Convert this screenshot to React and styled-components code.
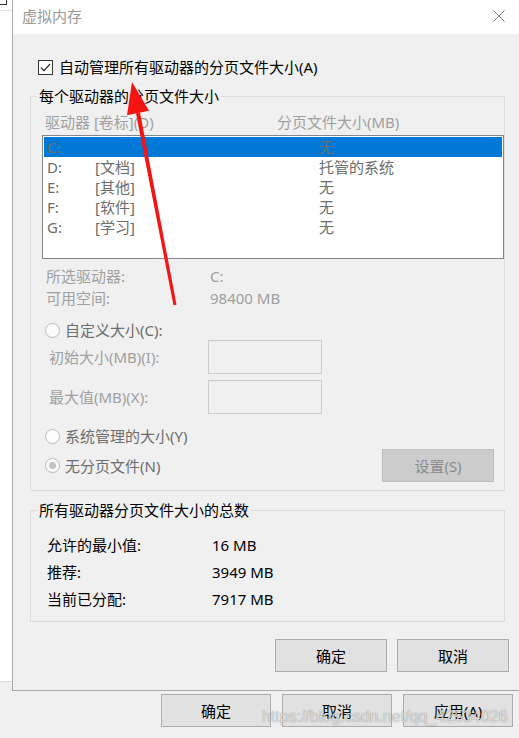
import React from 'react';
import styled, { createGlobalStyle } from 'styled-components';

const GlobalStyle = createGlobalStyle`
  html, body {
    margin: 0;
    padding: 0;
    background: #ffffff;
  }

  * {
    box-sizing: border-box;
  }
`;

const drives = [
  { letter: 'C:', label: '', size: '无', selected: true },
  { letter: 'D:', label: '[文档]', size: '托管的系统' },
  { letter: 'E:', label: '[其他]', size: '无' },
  { letter: 'F:', label: '[软件]', size: '无' },
  { letter: 'G:', label: '[学习]', size: '无' },
];

const totals = [
  { label: '允许的最小值:', value: '16 MB' },
  { label: '推荐:', value: '3949 MB' },
  { label: '当前已分配:', value: '7917 MB' },
];

const CheckIcon = () => (
  <svg width="13" height="13" viewBox="0 0 13 13">
    <path d="M2 6.6 L5 9.6 L11 3.2" fill="none" stroke="#1a1a1a" strokeWidth="1.2" />
  </svg>
);

const CloseIcon = () => (
  <svg width="12" height="12" viewBox="0 0 12 12">
    <path d="M0.5 0.5 L11.5 11.5 M11.5 0.5 L0.5 11.5" stroke="#7a7a7a" strokeWidth="1" />
  </svg>
);

const Arrow = () => (
  <ArrowLayer viewBox="0 0 519 738" width="519" height="738">
    <polygon points="136,113.4 140,112.6 176.5,304.7 173.5,305.3" fill="#f41414" />
    <polygon points="132,82 149,110.8 127,115.2" fill="#f41414" />
  </ArrowLayer>
);

const App = () => {
  return (
    <>
      <GlobalStyle />
      <Screen>
        <ParentWindow>
          <ParentContent>
            <ParentCheck />
            <ParentRule />
          </ParentContent>
          <ParentFooter>
            <DialogButton>确定</DialogButton>
            <DialogButton>取消</DialogButton>
            <DialogButton>应用(A)</DialogButton>
          </ParentFooter>
        </ParentWindow>

        <Dialog>
          <TitleBar>
            <Title>虚拟内存</Title>
            <CloseIcon />
          </TitleBar>

          <Body>
            <CheckRow>
              <CheckBox>
                <CheckIcon />
              </CheckBox>
              <span>自动管理所有驱动器的分页文件大小(A)</span>
            </CheckRow>

            <Group>
              <Legend>每个驱动器的分页文件大小</Legend>
              <GroupInner>
                <ListHeader>
                  <span>驱动器 [卷标](D)</span>
                  <span>分页文件大小(MB)</span>
                </ListHeader>
                <ListBox>
                  {drives.map((d) => (
                    <ListRow key={d.letter} selected={d.selected}>
                      <span>{d.letter}</span>
                      <span>{d.label}</span>
                      <span>{d.size}</span>
                    </ListRow>
                  ))}
                </ListBox>

                <InfoRow first>
                  <span>所选驱动器:</span>
                  <span>C:</span>
                </InfoRow>
                <InfoRow>
                  <span>可用空间:</span>
                  <span>98400 MB</span>
                </InfoRow>

                <RadioRow gap={12}>
                  <Radio />
                  <span>自定义大小(C):</span>
                </RadioRow>
                <SizeRow>
                  <span>初始大小(MB)(I):</span>
                  <SizeInput />
                </SizeRow>
                <SizeRow gap={6}>
                  <span>最大值(MB)(X):</span>
                  <SizeInput />
                </SizeRow>

                <RadioRow gap={12}>
                  <Radio />
                  <span>系统管理的大小(Y)</span>
                </RadioRow>
                <LastRow>
                  <RadioRow>
                    <Radio checked />
                    <span>无分页文件(N)</span>
                  </RadioRow>
                  <SetButton>设置(S)</SetButton>
                </LastRow>
              </GroupInner>
            </Group>

            <Group second>
              <Legend>所有驱动器分页文件大小的总数</Legend>
              <TotalsInner>
                {totals.map((t) => (
                  <TotalRow key={t.label}>
                    <span>{t.label}</span>
                    <span>{t.value}</span>
                  </TotalRow>
                ))}
              </TotalsInner>
            </Group>

            <ButtonRow>
              <DialogButton wide>确定</DialogButton>
              <DialogButton wide>取消</DialogButton>
            </ButtonRow>
          </Body>
        </Dialog>

        <Arrow />
        <Watermark>https://blog.csdn.net/qq_42534026</Watermark>
      </Screen>
    </>
  );
};

export default App;

/* Styled Components */

const Screen = styled.div`
  position: relative;
  width: 519px;
  height: 738px;
  overflow: hidden;
  background: #ffffff;
  font-family: "Noto Sans", "Noto Sans CJK SC", sans-serif;
  font-size: 15px;
  line-height: 20px;
  color: #000;
`;

const ParentWindow = styled.div`
  display: flex;
  flex-direction: column;
  height: 100%;
`;

const ParentContent = styled.div`
  position: relative;
  flex: 0 0 682px;
  background: #ffffff;
  border-bottom: 1px solid #d9d9d9;
`;

const ParentCheck = styled.div`
  position: absolute;
  top: -8px;
  left: -6px;
  width: 13px;
  height: 13px;
  border: 1px solid #333;
  background: #fff;
`;

const ParentRule = styled.div`
  position: absolute;
  top: 10px;
  left: 0;
  width: 12px;
  border-top: 1px solid #e3e3e3;
`;

const ParentFooter = styled.div`
  flex: 1;
  background: #f0f0f0;
  display: flex;
  justify-content: flex-end;
  align-items: flex-start;
  gap: 11px;
  padding: 12px 6px 0 0;
`;

const DialogButton = styled.div`
  width: ${(p) => (p.wide ? '112px' : '110px')};
  height: 33px;
  display: flex;
  align-items: center;
  justify-content: center;
  background: #e1e1e1;
  border: 1px solid #adadad;
  color: #000;
`;

const Dialog = styled.div`
  position: absolute;
  top: 0;
  left: 12px;
  width: 511px;
  height: 691px;
  display: flex;
  flex-direction: column;
  border: 1px solid #aaaaaa;
  border-top: none;
  background: #f0f0f0;
`;

const TitleBar = styled.div`
  flex: 0 0 34px;
  display: flex;
  align-items: center;
  justify-content: space-between;
  padding: 0 17px 2px 9px;
  background: #ffffff;
`;

const Title = styled.span`
  color: #9a9a9a;
`;

const Body = styled.div`
  flex: 1;
  display: flex;
  flex-direction: column;
  padding: 0 17px;
`;

const CheckRow = styled.div`
  display: flex;
  align-items: center;
  gap: 6px;
  height: 20px;
  margin-top: 23px;
  padding-left: 8px;
`;

const CheckBox = styled.div`
  width: 15px;
  height: 15px;
  display: flex;
  align-items: center;
  justify-content: center;
  border: 1px solid #333333;
  background: #ffffff;
`;

const Group = styled.fieldset`
  margin: 9px 0 0 0;
  padding: 0;
  width: 475px;
  border: 1px solid #dcdcdc;
  min-width: 0;
`;

const Legend = styled.legend`
  margin-left: 6px;
  padding: 0 2px;
  line-height: 20px;
  color: #000;
`;

const GroupInner = styled.div`
  display: flex;
  flex-direction: column;
  padding: 6px 0 8px 11px;
  color: #a0a0a0;
`;

const ListHeader = styled.div`
  display: grid;
  grid-template-columns: 232px 1fr;
  height: 20px;
  padding-left: 3px;
`;

const ListBox = styled.div`
  margin-top: 3px;
  width: 462px;
  height: 124px;
  padding-top: 1px;
  border: 1px solid #828790;
  background: #ffffff;
`;

const ListRow = styled.div`
  display: grid;
  grid-template-columns: 48px 224px 1fr;
  height: 20px;
  margin: 0 1px;
  padding-left: 3px;
  color: #6d6d6d;
  background: ${(p) => (p.selected ? '#0078d7' : 'transparent')};
`;

const InfoRow = styled.div`
  display: grid;
  grid-template-columns: 164px 1fr;
  height: 20px;
  margin-top: ${(p) => (p.first ? '7px' : '2px')};
  padding-left: 4px;
`;

const RadioRow = styled.div`
  display: flex;
  align-items: center;
  gap: 5px;
  height: 20px;
  margin-top: ${(p) => p.gap || 0}px;
  padding-left: 3px;
  color: #6d6d6d;
`;

const Radio = styled.span`
  position: relative;
  width: 15px;
  height: 15px;
  border-radius: 50%;
  border: 1px solid #bcbcbc;
  background: #fcfcfc;

  &::after {
    content: '';
    display: ${(p) => (p.checked ? 'block' : 'none')};
    position: absolute;
    top: 3px;
    left: 3px;
    width: 7px;
    height: 7px;
    border-radius: 50%;
    background: #c2c2c2;
  }
`;

const SizeRow = styled.div`
  display: grid;
  grid-template-columns: 159px 114px;
  align-items: center;
  height: 34px;
  margin-top: ${(p) => p.gap || 0}px;
  padding-left: 7px;
`;

const SizeInput = styled.div`
  width: 114px;
  height: 34px;
  border: 1px solid #cccccc;
  background: #f0f0f0;
`;

const LastRow = styled.div`
  display: flex;
  align-items: center;
  justify-content: space-between;
  height: 33px;
  margin-top: 3px;
  padding-right: 10px;
`;

const SetButton = styled.div`
  width: 112px;
  height: 33px;
  display: flex;
  align-items: center;
  justify-content: center;
  background: #cccccc;
  border: 1px solid #bfbfbf;
  color: #8c8c8c;
`;

const TotalsInner = styled.div`
  display: flex;
  flex-direction: column;
  padding: 12px 0 8px 16px;
`;

const TotalRow = styled.div`
  display: grid;
  grid-template-columns: 165px 1fr;
  height: 27px;
  line-height: 27px;
  color: #000;
`;

const ButtonRow = styled.div`
  display: flex;
  justify-content: flex-end;
  gap: 10px;
  margin: 17px -4px 0 0;
`;

const ArrowLayer = styled.svg`
  position: absolute;
  top: 0;
  left: 0;
  pointer-events: none;
`;

const Watermark = styled.div`
  position: absolute;
  left: 262px;
  top: 706px;
  font-family: "Liberation Sans", Arial, sans-serif;
  font-size: 16px;
  line-height: 22px;
  color: rgba(255, 255, 255, 0.72);
  text-shadow: 0 0 1px rgba(60, 60, 60, 0.7);
  white-space: nowrap;
  pointer-events: none;
`;
